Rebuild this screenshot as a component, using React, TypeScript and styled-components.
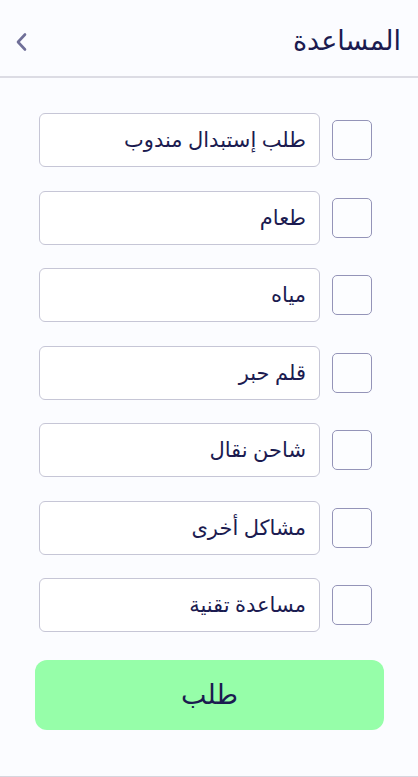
import React, { useState } from 'react'
import styled, { createGlobalStyle } from 'styled-components'

const GlobalStyle = createGlobalStyle`
  html, body {
    margin: 0;
    padding: 0;
    background: #fbfcff;
  }
  body {
    font-family: "Noto Sans", "DejaVu Sans", sans-serif;
    color: #1b1b50;
  }
`

const items = ['طلب إستبدال مندوب', 'طعام', 'مياه', 'قلم حبر', 'شاحن نقال', 'مشاكل أخرى', 'مساعدة تقنية']

const App = () => {
  const [checked, setChecked] = useState<string[]>([])
  const toggle = (name: string) => {
    setChecked(prev => (prev.includes(name) ? prev.filter(n => n !== name) : [...prev, name]))
  }
  return (
    <>
      <GlobalStyle />
      <Page dir="rtl">
        <Header>
          <Title>المساعدة</Title>
          <BackButton aria-label="back">
            <svg width="13" height="20" viewBox="0 0 13 20" fill="none">
              <path d="M10 2.5 L3 10 L10 17.5" stroke="#6f6f98" strokeWidth="2.6" strokeLinecap="round" strokeLinejoin="round" />
            </svg>
          </BackButton>
        </Header>
        <List>
          {items.map(name => (
            <Row key={name}>
              <Check checked={checked.includes(name)} onClick={() => toggle(name)} />
              <Field>{name}</Field>
            </Row>
          ))}
        </List>
        <SubmitWrap>
          <SubmitButton>طلب</SubmitButton>
        </SubmitWrap>
      </Page>
    </>
  )
}

const Page = styled.div`
  width: 418px;
  height: 777px;
  box-sizing: border-box;
  border-bottom: 1px solid #d6d6de;
  display: flex;
  flex-direction: column;
`

const Header = styled.div`
  height: 78px;
  box-sizing: border-box;
  border-bottom: 2px solid #dcdce4;
  display: flex;
  align-items: center;
  justify-content: space-between;
  padding: 0 17px 0 15px;
`

const Title = styled.h1`
  margin: 0;
  font-size: 27px;
  font-weight: 400;
  color: #1b1b50;
  line-height: 1;
  padding-top: 2px;
`

const BackButton = styled.button`
  border: none;
  background: none;
  padding: 0;
  display: flex;
  align-items: center;
  cursor: pointer;
  margin-top: 8px;
`

const List = styled.div`
  display: flex;
  flex-direction: column;
  gap: 23.5px;
  padding: 35px 46px 0 39px;
`

const Row = styled.div`
  display: flex;
  align-items: center;
  gap: 12px;
`

const Check = styled.div<{ checked: boolean }>`
  width: 40px;
  height: 40px;
  box-sizing: border-box;
  flex-shrink: 0;
  border: 1.5px solid #9494b8;
  border-radius: 5px;
  background: ${props => (props.checked ? '#1b1b50' : '#fcfdff')};
  cursor: pointer;
`

const Field = styled.div`
  flex: 1;
  height: 54px;
  box-sizing: border-box;
  border: 1px solid #c6c6d6;
  border-radius: 6px;
  background: #ffffff;
  display: flex;
  align-items: center;
  padding: 0 13px 2px;
  font-size: 21px;
  color: #1b1b50;
`

const SubmitWrap = styled.div`
  padding: 28px 34px 0 35px;
`

const SubmitButton = styled.button`
  width: 100%;
  height: 70px;
  border: none;
  border-radius: 12px;
  background: #96fea9;
  font-family: inherit;
  font-size: 27px;
  color: #1b1b50;
  cursor: pointer;
  padding-bottom: 4px;
`

export default App
